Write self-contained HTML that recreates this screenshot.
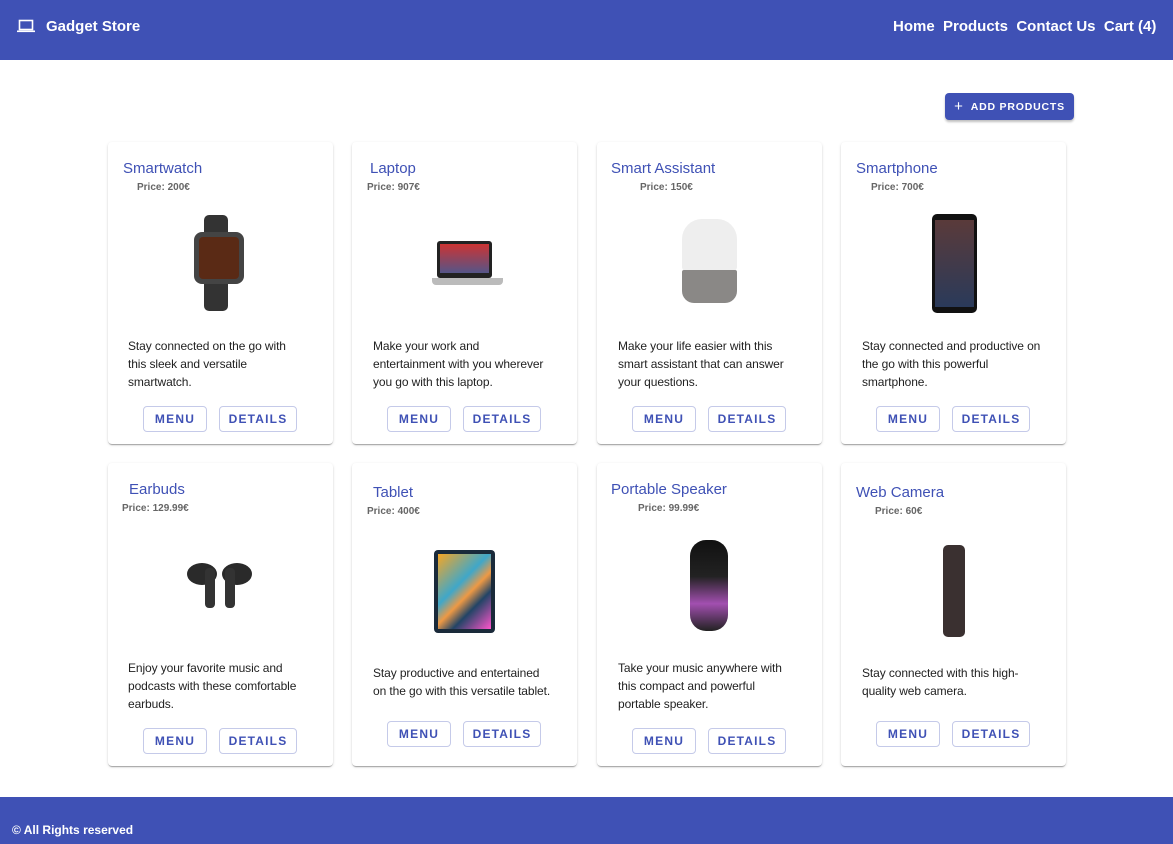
<!DOCTYPE html>
<html><head><meta charset="utf-8"><style>
*{margin:0;padding:0;box-sizing:border-box}
body{width:1173px;height:844px;position:relative;background:#fff;font-family:"Liberation Sans",Arial,sans-serif;overflow:hidden}
.a{position:absolute;white-space:nowrap}
.hdr{position:absolute;left:0;top:0;width:1173px;height:60px;background:#3f51b5}
.ftr{position:absolute;left:0;top:797px;width:1173px;height:47px;background:#3f51b5}
.w{color:#fff;font-weight:bold}
.card{position:absolute;width:225px;background:#fff;border-radius:4px;box-shadow:0 2px 1px -1px rgba(0,0,0,.2),0 1px 1px 0 rgba(0,0,0,.14),0 1px 3px 0 rgba(0,0,0,.12)}
.t{color:#3f51b5;font-size:15px;font-weight:500}
.p{color:#666;font-size:10px;font-weight:bold}
.d{color:#222;font-size:12px;line-height:18px;letter-spacing:-0.1px}
.b{position:absolute;height:26px;border:1px solid #c5cae9;border-radius:4px;color:#3f51b5;font-size:12px;font-weight:bold;letter-spacing:1.2px;display:flex;align-items:center;justify-content:center}
</style></head><body>
<div class="hdr"></div>
<svg class="a" style="left:17px;top:19px" width="18" height="14" viewBox="0 0 18 14"><rect x="2.5" y="1.5" width="13" height="9" fill="none" stroke="#fff" stroke-width="1.6"/><rect x="0" y="11.5" width="18" height="1.6" fill="#fff"/></svg>
<div class="a w" style="left:46px;top:18px;font-size:15px">Gadget Store</div>
<div class="a w" style="left:893px;top:18px;font-size:15px">Home&nbsp;&nbsp;Products&nbsp;&nbsp;Contact Us&nbsp;&nbsp;Cart (4)</div>
<div class="a" style="left:945px;top:93px;width:129px;height:27px;background:#3f51b5;border-radius:4px;box-shadow:0 2px 2px rgba(0,0,0,.25);color:#fff;font-size:10.5px;font-weight:bold;letter-spacing:0.8px;display:flex;align-items:center;justify-content:center"><span style="font-size:15px;font-weight:normal;margin-right:7px">+</span>ADD PRODUCTS</div>

<div class="card" style="left:108px;top:142px;height:302px"></div>
<div class="card" style="left:352px;top:142px;height:302px"></div>
<div class="card" style="left:597px;top:142px;height:302px"></div>
<div class="card" style="left:841px;top:142px;height:302px"></div>
<div class="card" style="left:108px;top:463px;height:303px"></div>
<div class="card" style="left:352px;top:463px;height:303px"></div>
<div class="card" style="left:597px;top:463px;height:303px"></div>
<div class="card" style="left:841px;top:463px;height:303px"></div>

<div class="a t" style="left:123px;top:160px">Smartwatch</div><div class="a p" style="left:137px;top:182px">Price: 200€</div>
<div class="a t" style="left:370px;top:160px">Laptop</div><div class="a p" style="left:367px;top:182px">Price: 907€</div>
<div class="a t" style="left:611px;top:160px">Smart Assistant</div><div class="a p" style="left:640px;top:182px">Price: 150€</div>
<div class="a t" style="left:856px;top:160px">Smartphone</div><div class="a p" style="left:871px;top:182px">Price: 700€</div>

<div class="a" style="left:204px;top:215px;width:24px;height:96px;background:#333;border-radius:5px"></div>
<div class="a" style="left:194px;top:232px;width:50px;height:52px;background:#444;border-radius:8px"></div>
<div class="a" style="left:199px;top:237px;width:40px;height:42px;background:#5a2a15;border-radius:4px"></div>
<div class="a" style="left:437px;top:241px;width:55px;height:37px;background:#222;border-radius:3px"></div>
<div class="a" style="left:440px;top:244px;width:49px;height:29px;background:linear-gradient(#c33,#558)"></div>
<div class="a" style="left:432px;top:278px;width:71px;height:7px;background:#bbb;border-radius:0 0 4px 4px"></div>
<div class="a" style="left:682px;top:219px;width:55px;height:52px;background:#eee;border-radius:20px 20px 4px 4px"></div>
<div class="a" style="left:682px;top:270px;width:55px;height:33px;background:#8a8886;border-radius:2px 2px 12px 12px"></div>
<div class="a" style="left:932px;top:214px;width:45px;height:99px;background:#111;border-radius:5px"></div>
<div class="a" style="left:935px;top:220px;width:39px;height:87px;background:linear-gradient(#5a3a3a,#2a3a5a)"></div>

<div class="a d" style="left:128px;top:337px">Stay connected on the go with<br>this sleek and versatile<br>smartwatch.</div>
<div class="a d" style="left:373px;top:337px">Make your work and<br>entertainment with you wherever<br>you go with this laptop.</div>
<div class="a d" style="left:618px;top:337px">Make your life easier with this<br>smart assistant that can answer<br>your questions.</div>
<div class="a d" style="left:862px;top:337px">Stay connected and productive on<br>the go with this powerful<br>smartphone.</div>

<div class="b" style="left:143px;top:406px;width:64px">MENU</div><div class="b" style="left:219px;top:406px;width:78px">DETAILS</div>
<div class="b" style="left:387px;top:406px;width:64px">MENU</div><div class="b" style="left:463px;top:406px;width:78px">DETAILS</div>
<div class="b" style="left:632px;top:406px;width:64px">MENU</div><div class="b" style="left:708px;top:406px;width:78px">DETAILS</div>
<div class="b" style="left:876px;top:406px;width:64px">MENU</div><div class="b" style="left:952px;top:406px;width:78px">DETAILS</div>

<div class="a t" style="left:129px;top:481px">Earbuds</div><div class="a p" style="left:122px;top:503px">Price: 129.99€</div>
<div class="a t" style="left:373px;top:484px">Tablet</div><div class="a p" style="left:367px;top:506px">Price: 400€</div>
<div class="a t" style="left:611px;top:481px">Portable Speaker</div><div class="a p" style="left:638px;top:503px">Price: 99.99€</div>
<div class="a t" style="left:856px;top:484px">Web Camera</div><div class="a p" style="left:875px;top:506px">Price: 60€</div>

<div class="a" style="left:187px;top:563px;width:30px;height:22px;background:#2a2a2a;border-radius:50%"></div>
<div class="a" style="left:205px;top:568px;width:10px;height:40px;background:#333;border-radius:4px"></div>
<div class="a" style="left:222px;top:563px;width:30px;height:22px;background:#2a2a2a;border-radius:50%"></div>
<div class="a" style="left:225px;top:568px;width:10px;height:40px;background:#333;border-radius:4px"></div>
<div class="a" style="left:434px;top:550px;width:61px;height:83px;background:#1a2a3a;border-radius:4px"></div>
<div class="a" style="left:438px;top:554px;width:53px;height:75px;background:linear-gradient(135deg,#f6a623,#3fa7c9 40%,#e94,#246 70%,#f5c)"></div>
<div class="a" style="left:690px;top:540px;width:38px;height:91px;background:linear-gradient(#111,#222 40%,#a24fb0 70%,#222);border-radius:16px"></div>
<div class="a" style="left:943px;top:545px;width:22px;height:92px;background:#3a3030;border-radius:5px"></div>

<div class="a d" style="left:128px;top:659px">Enjoy your favorite music and<br>podcasts with these comfortable<br>earbuds.</div>
<div class="a d" style="left:373px;top:664px">Stay productive and entertained<br>on the go with this versatile tablet.</div>
<div class="a d" style="left:618px;top:659px">Take your music anywhere with<br>this compact and powerful<br>portable speaker.</div>
<div class="a d" style="left:862px;top:664px">Stay connected with this high-<br>quality web camera.</div>

<div class="b" style="left:143px;top:728px;width:64px">MENU</div><div class="b" style="left:219px;top:728px;width:78px">DETAILS</div>
<div class="b" style="left:387px;top:721px;width:64px">MENU</div><div class="b" style="left:463px;top:721px;width:78px">DETAILS</div>
<div class="b" style="left:632px;top:728px;width:64px">MENU</div><div class="b" style="left:708px;top:728px;width:78px">DETAILS</div>
<div class="b" style="left:876px;top:721px;width:64px">MENU</div><div class="b" style="left:952px;top:721px;width:78px">DETAILS</div>

<div class="ftr"></div>
<div class="a w" style="left:12px;top:823px;font-size:12px">© All Rights reserved</div>
</body></html>
